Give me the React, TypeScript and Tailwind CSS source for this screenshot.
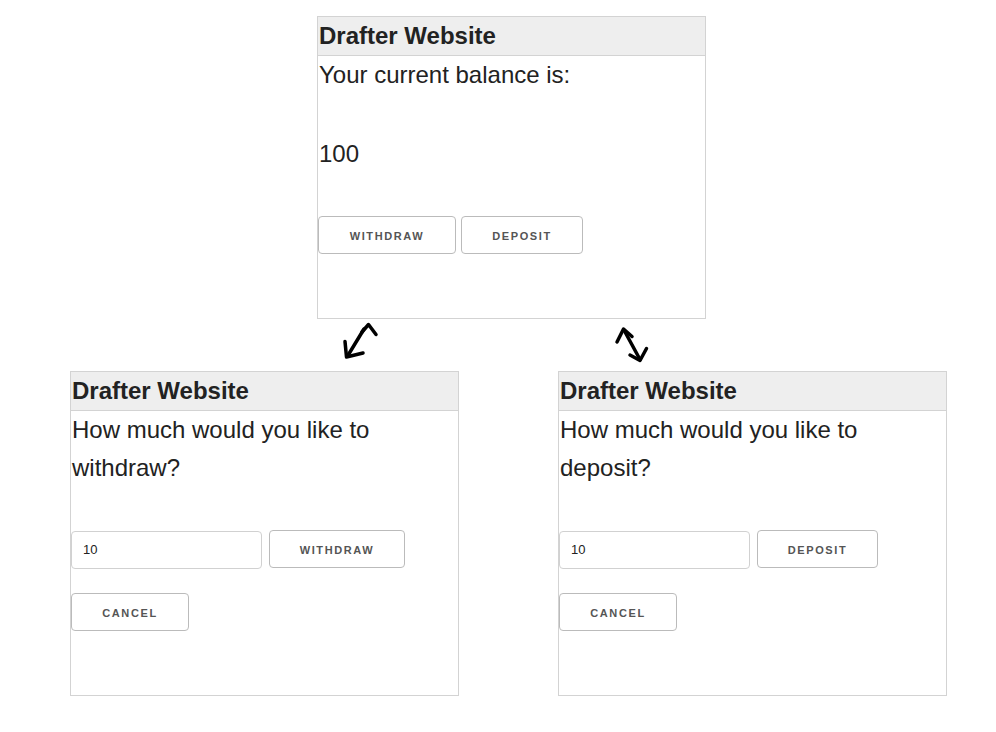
import React from "react";

const font = { fontFamily: '"Liberation Sans", Arial, sans-serif' };

function Btn({ label, w }: { label: string; w: string }) {
  return (
    <button
      className={`${w} h-[38px] shrink-0 rounded-[4px] border border-[#bbb] bg-white pt-[2px] text-[11px] font-bold uppercase tracking-[1.6px] text-[#555] leading-[34px] text-center`}
    >
      {label}
    </button>
  );
}

function Header() {
  return (
    <div className="h-[39px] border-b border-[#d3d3d3] bg-[#eee] pl-[1px] text-[24px] font-bold leading-[38px] text-[#222]">
      Drafter Website
    </div>
  );
}

export default function App() {
  return (
    <div className="relative h-[732px] w-[996px] bg-white text-[#222]" style={font}>
      {/* Top window */}
      <div className="absolute left-[317px] top-[16px] flex h-[303px] w-[389px] flex-col border border-[#d3d3d3]">
        <Header />
        <div className="pl-[1px] text-[24px] leading-[38.4px]">Your current balance is:</div>
        <div className="mt-[41px] pl-[1px] text-[24px] leading-[38.4px]">100</div>
        <div className="mt-[42px] flex gap-[5px]">
          <Btn label="Withdraw" w="w-[138px]" />
          <Btn label="Deposit" w="w-[122px]" />
        </div>
      </div>

      {/* Arrows */}
      <svg className="absolute left-[335px] top-[318px]" width="50" height="48" viewBox="335 318 50 48" fill="none" stroke="#000" strokeWidth="3.5" strokeLinecap="round" strokeLinejoin="round">
        <path d="M362 332 L368.5 324.5 L376 334.5" />
        <path d="M364 329 L348.5 354.5" />
        <path d="M345 341.5 L346.5 357 L363 353" />
      </svg>
      <svg className="absolute left-[608px] top-[318px]" width="48" height="48" viewBox="608 318 48 48" fill="none" stroke="#000" strokeWidth="3.5" strokeLinecap="round" strokeLinejoin="round">
        <path d="M617 342 L623.5 329 L632 336.5" />
        <path d="M624.5 331 L640 359.5" />
        <path d="M630 355 L640 360.5 L646.5 348.5" />
      </svg>

      {/* Bottom-left window */}
      <div className="absolute left-[70px] top-[371px] flex h-[325px] w-[389px] flex-col border border-[#d3d3d3]">
        <Header />
        <div className="pl-[1px] text-[24px] leading-[38.4px]">
          How much would you like to
          <br />
          withdraw?
        </div>
        <div className="mt-[42px] flex items-start gap-[7px]">
          <input
            readOnly
            value="10"
            className="mt-[1px] h-[38px] w-[191px] rounded-[4px] border border-[#d1d1d1] px-[11px] text-[13px] text-[#222] outline-none"
            style={font}
          />
          <Btn label="Withdraw" w="w-[136px]" />
        </div>
        <div className="mt-[24px] flex">
          <Btn label="Cancel" w="w-[118px]" />
        </div>
      </div>

      {/* Bottom-right window */}
      <div className="absolute left-[558px] top-[371px] flex h-[325px] w-[389px] flex-col border border-[#d3d3d3]">
        <Header />
        <div className="pl-[1px] text-[24px] leading-[38.4px]">
          How much would you like to
          <br />
          deposit?
        </div>
        <div className="mt-[42px] flex items-start gap-[7px]">
          <input
            readOnly
            value="10"
            className="mt-[1px] h-[38px] w-[191px] rounded-[4px] border border-[#d1d1d1] px-[11px] text-[13px] text-[#222] outline-none"
            style={font}
          />
          <Btn label="Deposit" w="w-[121px]" />
        </div>
        <div className="mt-[24px] flex">
          <Btn label="Cancel" w="w-[118px]" />
        </div>
      </div>
    </div>
  );
}
